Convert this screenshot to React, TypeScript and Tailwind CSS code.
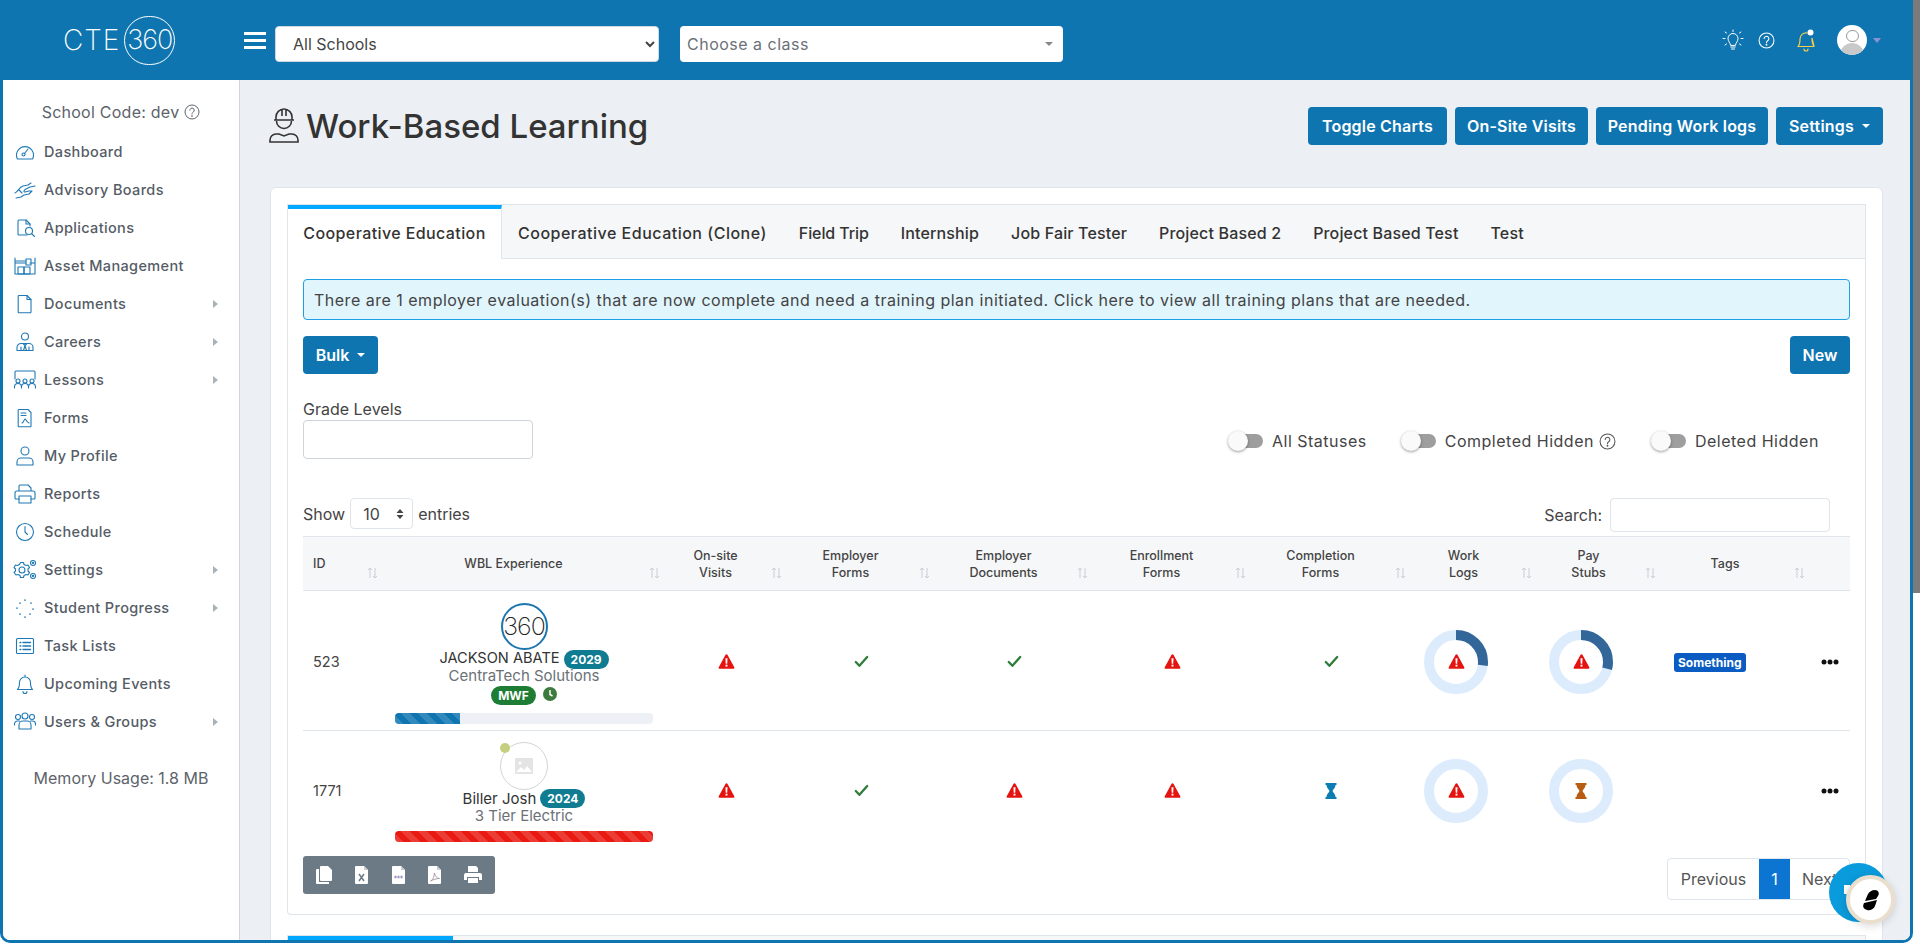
import type { ReactNode } from 'react';

function Ico({ children, w = 24 }: { children: ReactNode; w?: number }) {
  return (
    <svg width={w} height={22} viewBox={`0 0 ${w} 22`} fill="none" stroke="#2079b5" strokeWidth="1.1" strokeLinecap="round" strokeLinejoin="round">
      {children}
    </svg>
  );
}

const navIcons: Record<string, ReactNode> = {
  Dashboard: <Ico><path d="M5 18h14a1 1 0 0 0 1-1 8.5 8.5 0 1 0-16 0 1 1 0 0 0 1 1Z" /><circle cx="10.5" cy="13.5" r="1.5" /><path d="M11.500 12.500 15 8" /></Ico>,
  'Advisory Boards': <Ico><path d="M2 14c3-1 4-6 8-7l5-1 3-2M22 7l-5 1-4 2c-2 1-3 3-1 3l4-1 3 0-3 3-5 1-3 2-5 1" /><path d="M6 11l3 3" /></Ico>,
  Applications: <Ico><path d="M14 18H6a1 1 0 0 1-1-1V4a1 1 0 0 1 1-1h7l4 4v2" /><path d="M13 3v4h4" /><circle cx="16" cy="14" r="3.500" /><path d="m19 17 2.500 2.500" /></Ico>,
  'Asset Management': <Ico><path d="M2 3v16M22 3v16M2 19h20M2 8h11M17 8h5M2 6h11" /><rect x="13" y="4" width="5" height="6" /><rect x="5" y="12" width="6" height="7" /><rect x="11" y="12" width="6" height="7" /></Ico>,
  Documents: <Ico><path d="M6 2.500h8l4 4V19a.8.8 0 0 1-.8.8H6a.8.8 0 0 1-.8-.8V3.300a.8.8 0 0 1 .8-.8Z" /><path d="M14 2.500v4h4" /></Ico>,
  Careers: <Ico><circle cx="12" cy="5.500" r="3.500" /><path d="M4 19.500v-3a4 4 0 0 1 4-4h8a4 4 0 0 1 4 4v3ZM10 12.500l2 2 2-2M12 14.500l-1.500 5M12 14.500l1.500 5M8 16v3.500M16 16v3.500" /></Ico>,
  Lessons: <Ico><path d="M2 10V3a1 1 0 0 1 1-1h18a1 1 0 0 1 1 1v7" /><circle cx="5" cy="12" r="2" /><circle cx="12" cy="12" r="2" /><circle cx="19" cy="12" r="2" /><path d="M1.500 19v-1a3 3 0 0 1 7 0v1M8.500 19v-1a3 3 0 0 1 7 0v1M15.500 19v-1a3 3 0 0 1 7 0v1" /></Ico>,
  Forms: <Ico><path d="M6 2.500h9l3 3V19a.8.8 0 0 1-.8.8H6a.8.8 0 0 1-.8-.8V3.300a.8.8 0 0 1 .8-.8Z" /><path d="M8 6h5M8 8.500h5M9 16c2-.500 2-4 3-4s1 3 4 4" /></Ico>,
  'My Profile': <Ico><circle cx="12" cy="6" r="4" /><path d="M4 20v-3a4 4 0 0 1 4-4h8a4 4 0 0 1 4 4v3Z" /></Ico>,
  Reports: <Ico><path d="M6 8V3a1 1 0 0 1 1-1h8l3 3v3M6 16H3a1 1 0 0 1-1-1v-5a2 2 0 0 1 2-2h16a2 2 0 0 1 2 2v5a1 1 0 0 1-1 1h-3" /><rect x="6" y="13" width="12" height="7" /></Ico>,
  Schedule: <Ico><circle cx="12" cy="11" r="8.500" /><path d="M12 5.500V11l2.500 2.500" /></Ico>,
  Settings: <Ico><circle cx="9" cy="11" r="3" /><path d="M7.500 3.500h3l.5 2 2 1 2-.5 1.500 2.500-1.500 1.500v2l1.500 1.500-1.500 2.500-2-.5-2 1-.5 2h-3l-.5-2-2-1-2 .5L1 13.500 2.500 12v-2L1 8.500 2.500 6l2 .5 2-1Z" /><circle cx="20" cy="4" r="2.500" /><circle cx="20" cy="17" r="2.500" /><circle cx="20" cy="4" r=".6" /><circle cx="20" cy="17" r=".6" /></Ico>,
  'Student Progress': <Ico><g strokeWidth="1.600"><path d="M12 3v.3M18 6v.3M20 12v.3M17 17v.3M12 20v.3M7 17v.3M4 11v.3M7 6v.3" /></g></Ico>,
  'Task Lists': <Ico><rect x="3.500" y="3.500" width="17" height="15" rx="1" /><path d="M7 7.500h.8M7 11h.8M7 14.500h.8M10 7.500h7.500M10 11h7.500M10 14.500h7.500" strokeWidth="1.400" /></Ico>,
  'Upcoming Events': <Ico><path d="M4.500 16.500c2-2 2-4 2-7a5.500 5.500 0 0 1 11 0c0 3 0 5 2 7ZM12 2v2M10 18.500a2 2 0 0 0 4 0" /></Ico>,
  'Users & Groups': <Ico><circle cx="5" cy="6" r="2.500" /><circle cx="12" cy="5" r="3" /><circle cx="19" cy="6" r="2.500" /><path d="M1.500 14v-1a3 3 0 0 1 3-3h2M22.500 14v-1a3 3 0 0 0-3-3h-2M6 18v-4a4 4 0 0 1 4-4h4a4 4 0 0 1 4 4v4Z" /></Ico>,
};

const navItems = [
  { label: 'Dashboard' },
  { label: 'Advisory Boards' },
  { label: 'Applications' },
  { label: 'Asset Management' },
  { label: 'Documents', arrow: true },
  { label: 'Careers', arrow: true },
  { label: 'Lessons', arrow: true },
  { label: 'Forms' },
  { label: 'My Profile' },
  { label: 'Reports' },
  { label: 'Schedule' },
  { label: 'Settings', arrow: true },
  { label: 'Student Progress', arrow: true },
  { label: 'Task Lists' },
  { label: 'Upcoming Events' },
  { label: 'Users & Groups', arrow: true },
];

const tabs = [
  { label: 'Cooperative Education (Clone)', spacing: 'tracking-[0.5px]' },
  { label: 'Field Trip', spacing: 'tracking-[-0.1px]' },
  { label: 'Internship', spacing: 'tracking-[0.15px]' },
  { label: 'Job Fair Tester', spacing: 'tracking-[0.15px]' },
  { label: 'Project Based 2', spacing: 'tracking-[0.15px]' },
  { label: 'Project Based Test', spacing: 'tracking-[0.15px]' },
  { label: 'Test', spacing: 'tracking-[0.15px]' },
];

const columns = [
  { label: ['ID'], width: 'w-[80px]', left: true },
  { label: ['WBL Experience'], width: 'w-[282px]' },
  { label: ['On-site', 'Visits'], width: 'w-[122px]' },
  { label: ['Employer', 'Forms'], width: 'w-[148px]' },
  { label: ['Employer', 'Documents'], width: 'w-[158px]' },
  { label: ['Enrollment', 'Forms'], width: 'w-[158px]' },
  { label: ['Completion', 'Forms'], width: 'w-[160px]' },
  { label: ['Work', 'Logs'], width: 'w-[126px]' },
  { label: ['Pay', 'Stubs'], width: 'w-[124px]' },
  { label: ['Tags'], width: 'w-[149px]' },
  { label: [], width: 'w-[40px]' },
];

function Help({ size = 15, color = '#555' }: { size?: number; color?: string }) {
  return (
    <svg width={size} height={size} viewBox="0 0 16 16" fill="none" stroke={color} strokeWidth="1">
      <circle cx="8" cy="8" r="7" />
      <path d="M5.800 6.200a2.200 2.200 0 1 1 3.500 1.800c-.8.600-1.300 1-1.300 2" strokeLinecap="round" />
      <circle cx="8" cy="12" r=".4" />
    </svg>
  );
}

function Warn({ size = 17 }: { size?: number }) {
  return (
    <svg width={size} height={size} viewBox="0 0 16 16">
      <path d="M8 1.200c.4 0 .7.2.9.500l6.400 11.600c.4.700 0 1.500-.8 1.500H1.500c-.8 0-1.200-.8-.8-1.500L7.100 1.700c.2-.3.500-.5.900-.5Z" fill="#e5130f" />
      <path d="M7 5h2l-.3 5H7.300Z" fill="#fff" />
      <rect x="7.100" y="11" width="1.800" height="1.800" fill="#fff" />
    </svg>
  );
}

function Check() {
  return (
    <svg width="15" height="13" viewBox="0 0 15 13" fill="none" stroke="#2f7d3b" strokeWidth="2.300" strokeLinecap="round" strokeLinejoin="round">
      <path d="m1.800 7 3.600 3.800 7.800-8.800" />
    </svg>
  );
}

function Hourglass({ color }: { color: string }) {
  return (
    <svg width="12" height="16" viewBox="0 0 12 16" fill={color}>
      <path d="M.5 0h11v2H10.500c0 3-2.500 4.500-3 6 .5 1.500 3 3 3 6h1v2H.5v-2h1c0-3 2.500-4.500 3-6-.5-1.500-3-3-3-6H.5Z" />
    </svg>
  );
}

function Donut({ pct, children }: { pct: number; children: ReactNode }) {
  const c = 2 * Math.PI * 27;
  return (
    <div className="relative flex h-16 w-16 items-center justify-center">
      <svg width="64" height="64" viewBox="0 0 64 64" className="absolute inset-0 -rotate-90">
        <circle cx="32" cy="32" r="27" fill="none" stroke="#ddecfd" strokeWidth="10" />
        {pct > 0 && <circle cx="32" cy="32" r="27" fill="none" stroke="#336699" strokeWidth="10" strokeDasharray={`${(c * pct) / 100} ${c}`} />}
      </svg>
      {children}
    </div>
  );
}

function Ellipsis() {
  return (
    <svg width="18" height="6" viewBox="0 0 18 6" fill="#111">
      <circle cx="3" cy="3" r="2.500" />
      <circle cx="9" cy="3" r="2.500" />
      <circle cx="15" cy="3" r="2.500" />
    </svg>
  );
}

function Toggle({ label, help }: { label: string; help?: boolean }) {
  return (
    <div className="flex items-center">
      <div className="flex items-center">
        <div className="z-10 h-5 w-5 rounded-full bg-[#fafafa] shadow-[0_1px_3px_rgba(0,0,0,0.4)]" />
        <div className="-ml-[6px] h-[14px] w-[21px] rounded-r-full bg-[#9e9e9e]" />
      </div>
      <span className="ml-[9px] text-[16px] tracking-[0.5px] text-[#444]">{label}</span>
      {help && <span className="ml-[5px]"><Help size={17} color="#555" /></span>}
    </div>
  );
}

function Bar({ pct, color, stripe }: { pct: number; color: string; stripe: string }) {
  return (
    <div className="mx-auto h-[11px] w-[258px] overflow-hidden rounded-[4px] bg-[#edf1f5]">
      <div
        className="h-full"
        style={{
          width: `${pct}%`,
          backgroundColor: color,
          backgroundImage: `repeating-linear-gradient(45deg, ${stripe} 0 6px, transparent 6px 12px)`,
        }}
      />
    </div>
  );
}

function FileIcon({ mark }: { mark: string }) {
  return (
    <svg width="14" height="18" viewBox="0 0 14 18">
      <path d="M1 0h8l4 4v13a1 1 0 0 1-1 1H1a1 1 0 0 1-1-1V1a1 1 0 0 1 1-1Z" fill="#fff" />
      <path d="M9 0v4h4" fill="#c9ced3" />
      {mark === 'x' && <path d="m4 8 5 7M9 8l-5 7" stroke="#6c7a86" strokeWidth="1.500" />}
      {mark === 'csv' && <path d="M2.500 11h9" stroke="#9a8fc0" strokeWidth="2.500" strokeDasharray="2 1" />}
      {mark === 'pdf' && <path d="M2.500 15c3-1 3.500-5 4-8 .5 3 2 5 5 5.500-3 0-6 1-9 2.500Z" fill="none" stroke="#9b8b9c" strokeWidth=".8" />}
    </svg>
  );
}

export default function App() {
  return (
    <div className="flex h-screen w-screen overflow-hidden bg-white font-['Inter',sans-serif]">
      <div className="flex min-w-0 flex-1 flex-col">
        <header className="flex h-20 shrink-0 items-center bg-[#0f75b0] pl-[63px] pr-[32px]">
          <div className="flex w-[181px] items-center text-white">
            <span className="text-[28px] font-extralight leading-none tracking-[1px]">CTE</span>
            <span className="ml-[4px] flex h-[49px] w-[51px] items-center justify-center rounded-full border border-white text-[27px] font-extralight tracking-[-1px]">360</span>
          </div>
          <div className="mt-[1px] flex w-[22px] flex-col gap-[4px]">
            <div className="h-[3px] bg-white" />
            <div className="h-[3px] bg-white" />
            <div className="h-[3px] bg-white" />
          </div>
          <select className="ml-[9px] mt-[8px] h-9 w-[384px] rounded-[4px] border border-[#cfd8e0] bg-white px-[13px] text-[16px] text-[#444]">
            <option>All Schools</option>
          </select>
          <div className="ml-[21px] mt-[8px] flex h-9 w-[383px] items-center justify-between rounded-[4px] bg-white pl-[7px] pr-[10px] text-[16px] tracking-[0.5px] text-[#6b7177]">
            <span>Choose a class</span>
            <span className="h-0 w-0 border-x-[4px] border-t-[4px] border-x-transparent border-t-[#888]" />
          </div>
          <div className="ml-auto flex items-center">
            <svg width="22" height="22" viewBox="0 0 22 22" fill="none" stroke="#fff" strokeWidth="1" strokeLinecap="round">
              <path d="M8.500 16c0-2-2.500-3.500-2.500-6.500a5 5 0 0 1 10 0c0 3-2.500 4.500-2.500 6.500ZM8.800 18h4.400M9.500 20h3M11 1v1.500M3 9.500H1M21 9.500h-2M4.500 4 3 3M17.500 4 19 3M4.500 15 3 16M17.500 15 19 16" />
            </svg>
            <span className="ml-[14px]"><Help size={17} color="#fff" /></span>
            <svg width="22" height="24" viewBox="0 0 22 24" fill="none" stroke="#f4cf47" strokeWidth="1.200" className="ml-[20px]">
              <path d="M3 18.500c2-2 2-4 2-7.500a6 6 0 0 1 7-6M17 10c0 5 .5 6.500 2 8.500ZM3 18.500h16M9 21a2 2 0 0 0 4 0" strokeLinecap="round" />
              <circle cx="15.500" cy="4.500" r="3" fill="#fff" stroke="none" />
            </svg>
            <div className="ml-[20px] flex h-[30px] w-[30px] flex-col items-center overflow-hidden rounded-full bg-white pt-[5px]">
              <div className="h-[13px] w-[13px] rounded-full border border-[#999]" />
              <div className="mt-[1px] h-[14px] w-[24px] rounded-t-full bg-[#c9c9c9]" />
            </div>
            <span className="ml-[6px] h-0 w-0 border-x-[4px] border-t-[5px] border-x-transparent border-t-[#8a93d0]" />
          </div>
        </header>

        <div className="flex min-h-0 flex-1 overflow-hidden rounded-b-[10px] border-x-[3px] border-b-[3px] border-[#0f75b0]">
          <aside className="flex w-[237px] shrink-0 flex-col border-r border-[#cfd6de] bg-white">
            <div className="mt-[20px] flex items-center justify-center gap-[5px] text-[16px] tracking-[0.25px] text-[#5d636b]">
              School Code: dev <Help size={16} color="#5d636b" />
            </div>
            <nav className="mt-[9px] flex flex-col">
              {navItems.map((item) => (
                <div key={item.label} className="flex h-[38px] items-center pl-[10px] pr-[21px]">
                  <span className="flex w-[31px] justify-start">{navIcons[item.label]}</span>
                  <span className="text-[14.500px] font-medium tracking-[0.35px] text-[#555c66]">{item.label}</span>
                  {item.arrow && <span className="ml-auto h-0 w-0 border-y-[4px] border-l-[5px] border-y-transparent border-l-[#aab2ba]" />}
                </div>
              ))}
            </nav>
            <div className="mt-[25px] text-center text-[16px] text-[#5d636b]">Memory Usage: 1.8 MB</div>
          </aside>

          <main className="min-w-0 flex-1 overflow-hidden bg-[#eceff4] pl-[30px] pr-[27px] pt-[27px]">
            <div className="flex h-[38px] items-center justify-between">
              <div className="flex items-center">
                <svg width="32" height="36" viewBox="0 0 32 36" fill="none" stroke="#333" strokeWidth="1.600" className="-ml-[2px]">
                  <path d="M8 12V9a8 8 0 0 1 16 0v3M6 12h20M14 1.500V8M18 1.500V8M8.500 13a7.500 7.500 0 0 0 15 0" />
                  <path d="M2 34v-2a6 6 0 0 1 6-6h3l5 2 5-2h3a6 6 0 0 1 6 6v2Z" />
                </svg>
                <h1 className="ml-[6px] text-[33px] font-medium leading-none text-[#333]">Work-Based Learning</h1>
              </div>
              <div className="flex gap-2 text-[16px] font-semibold tracking-[0.2px] text-white">
                <button className="h-[38px] w-[139px] rounded-[4px] bg-[#0f75b0]">Toggle Charts</button>
                <button className="h-[38px] w-[133px] rounded-[4px] bg-[#0f75b0]">On-Site Visits</button>
                <button className="h-[38px] w-[172px] rounded-[4px] bg-[#0f75b0]">Pending Work logs</button>
                <button className="flex h-[38px] w-[107px] items-center justify-center gap-[8px] rounded-[4px] bg-[#0f75b0]">
                  Settings <span className="h-0 w-0 border-x-[4px] border-t-[4px] border-x-transparent border-t-white" />
                </button>
              </div>
            </div>

            <section className="mt-[42px] rounded-t-[6px] border border-[#dfe5ea] bg-white px-[16px] pt-[16px]">
              <div className="flex h-[55px] border border-b-0 border-[#dfe5ea] bg-[#f6f7f9]">
                <div className="flex w-[214px] items-center justify-center border-r border-t-[4px] border-r-[#dfe5ea] border-t-[#00a8ff] bg-white pb-[2px] text-[16px] font-medium tracking-[0.4px] text-[#333]">
                  Cooperative Education
                </div>
                {tabs.map((t) => (
                  <div key={t.label} className={`flex items-center border-b border-[#dfe5ea] px-4 pt-[2px] text-[16px] font-medium text-[#333] ${t.spacing}`}>{t.label}</div>
                ))}
                <div className="flex-1 border-b border-[#dfe5ea]" />
              </div>

              <div className="h-[656px] rounded-b-[4px] border border-t-0 border-[#dfe5ea] px-[15px] pt-[20px]">
                <div className="flex h-[41px] items-center rounded-[4px] border border-[#1f9fe8] bg-[#e1f5fd] pl-[10px] text-[16px] tracking-[0.5px] text-[#444]">
                  There are 1 employer evaluation(s) that are now complete and need a training plan initiated. Click here to view all training plans that are needed.
                </div>

                <div className="mt-4 flex items-center justify-between text-[16px] font-semibold text-white">
                  <button className="flex h-[38px] w-[75px] items-center justify-center gap-[8px] rounded-[4px] bg-[#0f75b0]">
                    Bulk <span className="h-0 w-0 border-x-[4px] border-t-[4px] border-x-transparent border-t-white" />
                  </button>
                  <button className="h-[38px] w-[60px] rounded-[4px] bg-[#0f75b0]">New</button>
                </div>

                <div className="mt-[25px] flex items-end">
                  <div>
                    <div className="text-[16px] leading-[20px] text-[#444]">Grade Levels</div>
                    <div className="mt-[1px] h-[39px] w-[230px] rounded-[4px] border border-[#cfd4da]" />
                  </div>
                  <div className="mb-[6px] ml-[695px] flex items-center">
                    <Toggle label="All Statuses" />
                    <span className="w-[34px]" />
                    <Toggle label="Completed Hidden" help />
                    <span className="w-[35px]" />
                    <Toggle label="Deleted Hidden" />
                  </div>
                </div>

                <div className="mt-[39px] flex h-[34px] items-center justify-between text-[16px] text-[#444]">
                  <div className="mb-[3px] flex items-center gap-[5px]">
                    Show
                    <div className="flex h-[31px] w-[63px] items-center justify-between rounded-[4px] border border-[#dfe5ea] pl-[12px] pr-[8px]">
                      10
                      <svg width="8" height="12" viewBox="0 0 8 12" fill="#444"><path d="M4 1 7.500 5H.5ZM4 11 .5 7h7Z" /></svg>
                    </div>
                    entries
                  </div>
                  <div className="mr-[20px] flex items-center gap-[8px]">
                    Search:
                    <div className="h-[34px] w-[220px] rounded-[4px] border border-[#dfe5ea]" />
                  </div>
                </div>

                <table className="mt-[4px] w-[1547px] table-fixed border-collapse">
                  <colgroup>
                    {columns.map((c, i) => <col key={i} className={c.width} />)}
                  </colgroup>
                  <thead>
                    <tr className="h-[53px] border-y border-[#dfe5ea] bg-[#f6f7f9]">
                      {columns.map((c, i) => (
                        <th key={i} className="p-0 align-middle text-[12.500px] font-medium leading-[17px] text-[#444]">
                          {c.label.length > 0 && (
                            <div className="flex h-[53px] items-center pl-[10px] pr-[5px]">
                              <div className={c.left ? 'flex-1 text-left' : 'mr-[15px] flex-1 text-center'}>
                                {c.label.map((l) => <div key={l}>{l}</div>)}
                              </div>
                              <svg width="11" height="12" viewBox="0 0 11 12" fill="none" stroke="#c8ced4" strokeWidth="1" className="mt-[19px] self-center">
                                <path d="M3 11V1M1 3l2-2 2 2M8 1v10M6 9l2 2 2-2" />
                              </svg>
                            </div>
                          )}
                        </th>
                      ))}
                    </tr>
                  </thead>
                  <tbody className="text-[14.500px] text-[#444]">
                    <tr className="h-[140px] border-b border-[#dfe5ea] [&>td]:pt-[2px]">
                      <td className="pl-[10px]">523</td>
                      <td className="!pt-[6px] text-center">
                        <div className="flex flex-col items-center">
                          <div className="flex h-[47px] w-[47px] items-center justify-center rounded-full border-2 border-[#1d76ae] bg-white text-[25px] font-extralight tracking-[-1px] text-[#222]">360</div>
                          <div className="flex h-[18px] items-center gap-[4px] text-[14.600px] text-[#333]">
                            JACKSON ABATE
                            <span className="rounded-full bg-[#0f7c91] px-[7px] text-[12px] font-bold leading-[19px] text-white">2029</span>
                          </div>
                          <div className="h-[16px] text-[15px] leading-[16px] text-[#6b7177]">CentraTech Solutions</div>
                          <div className="mt-[1px] flex h-[20px] items-center gap-[7px]">
                            <span className="rounded-full bg-[#1e7d34] px-[7px] text-[12px] font-bold leading-[19px] text-white">MWF</span>
                            <svg width="14" height="14" viewBox="0 0 14 14" className="mb-[3px]"><circle cx="7" cy="7" r="7" fill="#3d7a3d" /><path d="M7 3v4.500l2.500 1.500" fill="none" stroke="#fff" strokeWidth="1.500" /></svg>
                          </div>
                          <div className="mt-[8px] w-full"><Bar pct={25} color="#0f75b0" stripe="rgba(255,255,255,0.15)" /></div>
                        </div>
                      </td>
                      <td><div className="flex justify-center"><Warn /></div></td>
                      <td><div className="flex justify-center"><Check /></div></td>
                      <td><div className="flex justify-center"><Check /></div></td>
                      <td><div className="flex justify-center"><Warn /></div></td>
                      <td><div className="flex justify-center"><Check /></div></td>
                      <td className="pl-[13px]"><Donut pct={27}><Warn /></Donut></td>
                      <td className="pl-[12px]"><Donut pct={29}><Warn /></Donut></td>
                      <td className="pl-[13px]"><span className="rounded-[3px] bg-[#0a5cc2] px-[4px] py-[2px] text-[12px] font-bold text-white">Something</span></td>
                      <td><div className="flex justify-center"><Ellipsis /></div></td>
                    </tr>
                    <tr className="h-[120px]">
                      <td className="pl-[10px]">1771</td>
                      <td className="pt-[2px] text-center">
                        <div className="flex flex-col items-center">
                          <div className="relative flex h-[48px] w-[48px] items-center justify-center rounded-full border border-[#d5d5d5] bg-white">
                            <span className="absolute -left-[1px] top-[0px] h-[10px] w-[10px] rounded-full bg-[#c5cf7f]" />
                            <svg width="18" height="16" viewBox="0 0 18 16"><rect width="18" height="16" fill="#e4e4e4" /><circle cx="5" cy="5" r="1.500" fill="#fff" /><path d="M1 14l5-5 3 3 3-4 5 6Z" fill="#fff" /></svg>
                          </div>
                          <div className="flex h-[18px] items-center gap-[4px] text-[15px] text-[#333]">
                            Biller Josh
                            <span className="rounded-full bg-[#0f7c91] px-[7px] text-[12px] font-bold leading-[19px] text-white">2024</span>
                          </div>
                          <div className="h-[16px] text-[15px] leading-[16px] text-[#6b7177]">3 Tier Electric</div>
                          <div className="mt-[7px] w-full"><Bar pct={100} color="#e81a12" stripe="rgba(255,255,255,0.15)" /></div>
                        </div>
                      </td>
                      <td><div className="flex justify-center"><Warn /></div></td>
                      <td><div className="flex justify-center"><Check /></div></td>
                      <td><div className="flex justify-center"><Warn /></div></td>
                      <td><div className="flex justify-center"><Warn /></div></td>
                      <td><div className="flex justify-center"><Hourglass color="#0b7db3" /></div></td>
                      <td className="pl-[13px]"><Donut pct={0}><Warn /></Donut></td>
                      <td className="pl-[12px]"><Donut pct={0}><Hourglass color="#b85c12" /></Donut></td>
                      <td />
                      <td><div className="flex justify-center"><Ellipsis /></div></td>
                    </tr>
                  </tbody>
                </table>

                <div className="mt-[5px] flex items-start justify-between">
                  <div className="flex h-[38px] w-[192px] items-center justify-between rounded-[3px] bg-[#6c7a86] px-[13px]">
                    <svg width="17" height="18" viewBox="0 0 17 18" fill="#fff"><path d="M5 0h7l4 4v10a1 1 0 0 1-1 1H5a1 1 0 0 1-1-1V1a1 1 0 0 1 1-1Z" /><path d="M1 3h2v13h10v2H1a1 1 0 0 1-1-1V4a1 1 0 0 1 1-1Z" /></svg>
                    <FileIcon mark="x" />
                    <FileIcon mark="csv" />
                    <FileIcon mark="pdf" />
                    <svg width="18" height="17" viewBox="0 0 18 17" fill="#fff"><path d="M4 0h8l2 2v4H4ZM2 7h14a2 2 0 0 1 2 2v5h-3v-3H3v3H0V9a2 2 0 0 1 2-2ZM4 12h10v5H4Z" /></svg>
                  </div>
                  <div className="mt-[2px] flex h-[42px] items-stretch overflow-hidden rounded-[4px] border border-[#dfe5ea] text-[16px] text-[#555]">
                    <span className="flex w-[91px] items-center justify-center">Previous</span>
                    <span className="flex w-[31px] items-center justify-center bg-[#0b75d1] text-white">1</span>
                    <span className="flex w-[59px] items-center pl-[12px]">Next</span>
                  </div>
                </div>
              </div>

              <div className="mt-[20px] flex h-[40px] border border-[#dfe5ea] bg-[#f6f7f9]">
                <div className="h-[4px] w-[165px] bg-[#00a8ff]" />
              </div>
            </section>
          </main>
        </div>
      </div>

      <div className="w-[7px] shrink-0 bg-white">
        <div className="h-[593px] bg-[#7b7b7b]" />
      </div>

      <div className="fixed left-[1829px] top-[863px] h-[59px] w-[59px] rounded-full bg-[#0a9bdc]" />
      <div className="fixed left-[1844px] top-[885px] h-[9px] w-[6px] bg-white" />
      <div className="fixed left-[1846px] top-[875px] flex h-[49px] w-[49px] items-center justify-center rounded-full border-[4px] border-[#eadfce] bg-white shadow-[0_2px_8px_rgba(0,0,0,0.15)]">
        <svg width="20" height="22" viewBox="0 0 20 22" fill="#000">
          <path d="M14 1c3 0 5 3 3 6l-2 3L4 12l3-7c1-2 4-4 7-4ZM16 11l-2 6c-1 3-5 5-8 4s-5-3-3-7Z" />
        </svg>
      </div>
    </div>
  );
}
